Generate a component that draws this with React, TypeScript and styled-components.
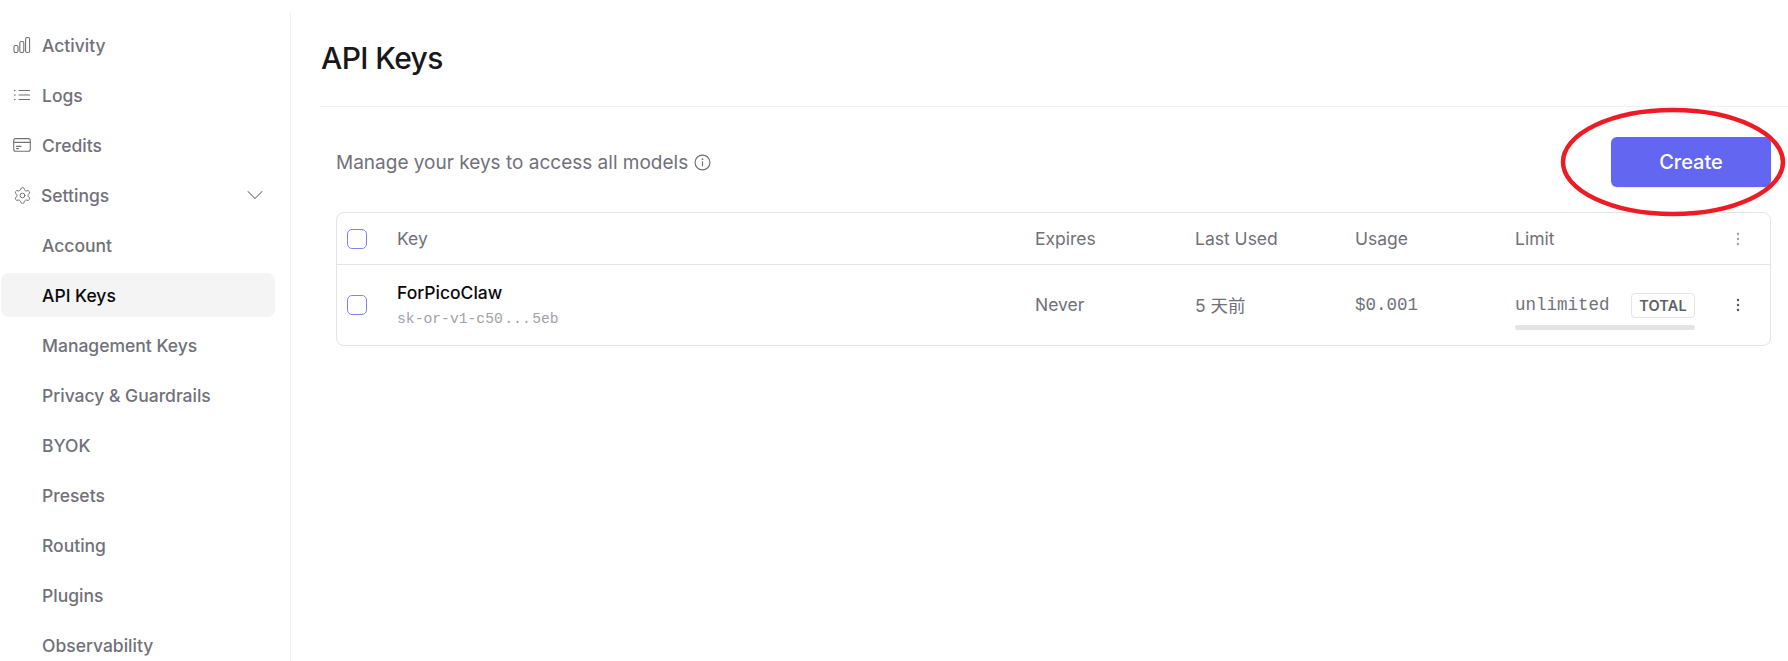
import styled, { createGlobalStyle } from "styled-components";
import { ChevronDown, Settings } from "lucide-react";

const GlobalStyle = createGlobalStyle`
  html, body {
    margin: 0;
    height: 100%;
    overflow: hidden;
    background: #fff;
    font-family: Inter, "Noto Sans CJK SC", sans-serif;
  }
`;

const Page = styled.div`
  position: relative;
  display: flex;
  width: 1788px;
  height: 661px;
  overflow: hidden;
`;

const Sidebar = styled.nav`
  display: flex;
  flex-direction: column;
  gap: 6px;
  flex: none;
  box-sizing: border-box;
  width: 291px;
  height: 649px;
  margin-top: 12px;
  padding: 11px 15px 0 1px;
  border-right: 1px solid #f1f1f3;
  overflow: hidden;
`;

const NavItem = styled.a<{ $active?: boolean; $indent?: boolean }>`
  display: flex;
  align-items: center;
  flex: none;
  height: 44px;
  padding-left: ${(p) => (p.$indent ? "41px" : "12px")};
  border-radius: 8px;
  font-size: 17.5px;
  font-weight: 500;
  color: ${(p) => (p.$active ? "#09090b" : "#71717a")};
  background: ${(p) => (p.$active ? "#f4f4f5" : "transparent")};
`;

const NavIcon = styled.span<{ $narrow?: boolean }>`
  display: flex;
  align-items: center;
  width: ${(p) => (p.$narrow ? "28px" : "29px")};
  color: #71717a;
`;

const Caret = styled.span`
  display: flex;
  margin-left: auto;
  margin-right: 6px;
  color: #71717a;
`;

const Main = styled.main`
  flex: 1;
  min-width: 0;
  padding-left: 29px;
`;

const Header = styled.header`
  display: flex;
  align-items: center;
  box-sizing: border-box;
  height: 107px;
  padding: 9px 0 0 1px;
  border-bottom: 1px solid #f1f1f3;
`;

const Title = styled.h1`
  margin: 0;
  font-size: 30px;
  font-weight: 500;
  letter-spacing: -0.6px;
  color: #18181b;
`;

const Content = styled.section`
  padding: 30px 17px 0 16px;
`;

const Toolbar = styled.div`
  display: flex;
  align-items: center;
  justify-content: space-between;
  margin-bottom: 25px;
`;

const Description = styled.p`
  display: flex;
  align-items: center;
  gap: 6px;
  margin: 0;
  font-size: 19px;
  color: #71717a;
`;

const CreateButton = styled.button`
  width: 160px;
  height: 50px;
  border: none;
  border-radius: 6px;
  background: #6366f1;
  color: #fff;
  font: 500 20px Inter, sans-serif;
  box-shadow: 0 1px 2px rgba(0, 0, 0, 0.1);
`;

const Table = styled.div`
  border: 1px solid #e4e4e7;
  border-radius: 8px;
`;

const Row = styled.div<{ $head?: boolean }>`
  display: grid;
  grid-template-columns: 60px 638px 160px 160px 160px 1fr 45px;
  align-items: center;
  box-sizing: border-box;
  height: ${(p) => (p.$head ? "52px" : "80px")};
  padding-bottom: ${(p) => (p.$head ? "0" : "1px")};
  font-size: 17.5px;
  color: #71717a;
  border-bottom: ${(p) => (p.$head ? "1px solid #e4e4e7" : "none")};
`;

const CheckCell = styled.div`
  display: flex;
  padding-left: 10px;
`;

const Checkbox = styled.span`
  box-sizing: border-box;
  width: 20px;
  height: 20px;
  border: 1px solid #8183f4;
  border-radius: 5px;
`;

const KeyCell = styled.div`
  margin-top: 2px;
`;

const KeyName = styled.div`
  font-size: 17.5px;
  font-weight: 500;
  color: #09090b;
  line-height: 20px;
`;

const KeyValue = styled.div`
  margin-top: 7px;
  font: 14.7px "Liberation Mono", monospace;
  line-height: 18px;
  color: #a1a1aa;
`;

const Dots = styled.span`
  margin: 0 1.5px;
`;

const Mono = styled.span`
  font-family: "Liberation Mono", monospace;
  font-size: 17.5px;
`;

const LimitCell = styled.div`
  display: flex;
  flex-direction: column;
  gap: 7px;
  width: 180px;
  margin-top: 13px;
`;

const LimitTop = styled.div`
  display: flex;
  align-items: center;
  justify-content: space-between;
`;

const Badge = styled.span`
  box-sizing: border-box;
  height: 25px;
  padding: 0 7px;
  border: 1px solid #e4e4e7;
  border-radius: 4px;
  font-size: 14.5px;
  font-weight: 600;
  line-height: 23px;
  letter-spacing: 0.2px;
  color: #5f5f68;
`;

const Track = styled.div`
  height: 5px;
  border-radius: 3px;
  background: #e4e4e7;
`;

const MenuCell = styled.div<{ $muted?: boolean }>`
  display: flex;
  justify-content: center;
  padding-right: 19px;
  color: ${(p) => (p.$muted ? "#a1a1aa" : "#52525b")};
`;

const Annotation = styled.svg`
  position: absolute;
  left: 1560px;
  top: 105px;
  pointer-events: none;
`;

function ActivityIcon() {
  return (
    <svg width="18" height="18" viewBox="0 0 18 18" fill="none" stroke="currentColor" strokeWidth="1.1">
      <rect x="1" y="9.5" width="4" height="7" rx="1.4" />
      <rect x="6.8" y="5.5" width="4" height="11" rx="1.4" />
      <rect x="12.6" y="1.5" width="4" height="15" rx="1.4" />
    </svg>
  );
}

function LogsIcon() {
  return (
    <svg width="18" height="18" viewBox="0 0 18 18" fill="none" stroke="currentColor" strokeWidth="1.1" strokeLinecap="round">
      <path d="M6 4.5h10.5M6 9h10.5M6 13.5h10.5" />
      <path d="M1.8 4.5h.1M1.8 9h.1M1.8 13.5h.1" strokeWidth="1.6" />
    </svg>
  );
}

function CreditsIcon() {
  return (
    <svg width="18" height="18" viewBox="0 0 18 18" fill="none" stroke="currentColor" strokeWidth="1.1" strokeLinecap="round">
      <rect x="0.7" y="2.6" width="16.6" height="12.6" rx="2" />
      <path d="M1 6.4h16" />
      <path d="M3.5 10.4h4.5M3.5 12.6h2" />
    </svg>
  );
}

function InfoIcon() {
  return (
    <svg width="17" height="17" viewBox="0 0 16 16" fill="none" stroke="currentColor" strokeWidth="1.1" strokeLinecap="round">
      <circle cx="8" cy="8" r="7" />
      <path d="M8 7.4v3.6" />
      <path d="M8 4.9h.01" strokeWidth="1.6" />
    </svg>
  );
}

function DotsIcon() {
  return (
    <svg width="4" height="14" viewBox="0 0 4 14" fill="currentColor">
      <circle cx="2" cy="2" r="1.2" />
      <circle cx="2" cy="7" r="1.2" />
      <circle cx="2" cy="12" r="1.2" />
    </svg>
  );
}

const subItems = ["Management Keys", "Privacy & Guardrails", "BYOK", "Presets", "Routing", "Plugins", "Observability"];

export default function App() {
  return (
    <Page>
      <GlobalStyle />
      <Sidebar>
        <NavItem>
          <NavIcon><ActivityIcon /></NavIcon>Activity
        </NavItem>
        <NavItem>
          <NavIcon><LogsIcon /></NavIcon>Logs
        </NavItem>
        <NavItem>
          <NavIcon><CreditsIcon /></NavIcon>Credits
        </NavItem>
        <NavItem>
          <NavIcon $narrow><Settings size={19} strokeWidth={1.25} /></NavIcon>Settings
          <Caret><ChevronDown size={28} strokeWidth={0.9} /></Caret>
        </NavItem>
        <NavItem $indent>Account</NavItem>
        <NavItem $indent $active>API Keys</NavItem>
        {subItems.map((item) => (
          <NavItem $indent key={item}>{item}</NavItem>
        ))}
      </Sidebar>
      <Main>
        <Header>
          <Title>API Keys</Title>
        </Header>
        <Content>
          <Toolbar>
            <Description>
              Manage your keys to access all models <InfoIcon />
            </Description>
            <CreateButton>Create</CreateButton>
          </Toolbar>
          <Table>
            <Row $head>
              <CheckCell><Checkbox /></CheckCell>
              <div>Key</div>
              <div>Expires</div>
              <div>Last Used</div>
              <div>Usage</div>
              <div>Limit</div>
              <MenuCell $muted><DotsIcon /></MenuCell>
            </Row>
            <Row>
              <CheckCell><Checkbox /></CheckCell>
              <KeyCell>
                <KeyName>ForPicoClaw</KeyName>
                <KeyValue>sk-or-v1-c50<Dots>...</Dots>5eb</KeyValue>
              </KeyCell>
              <div>Never</div>
              <div>5 天前</div>
              <Mono>$0.001</Mono>
              <LimitCell>
                <LimitTop>
                  <Mono>unlimited</Mono>
                  <Badge>TOTAL</Badge>
                </LimitTop>
                <Track />
              </LimitCell>
              <MenuCell><DotsIcon /></MenuCell>
            </Row>
          </Table>
        </Content>
      </Main>
      <Annotation width="228" height="114" viewBox="0 0 228 114" fill="none">
        <ellipse cx="113" cy="57" rx="110" ry="52" stroke="#ed1c24" strokeWidth="4.5" />
      </Annotation>
    </Page>
  );
}
